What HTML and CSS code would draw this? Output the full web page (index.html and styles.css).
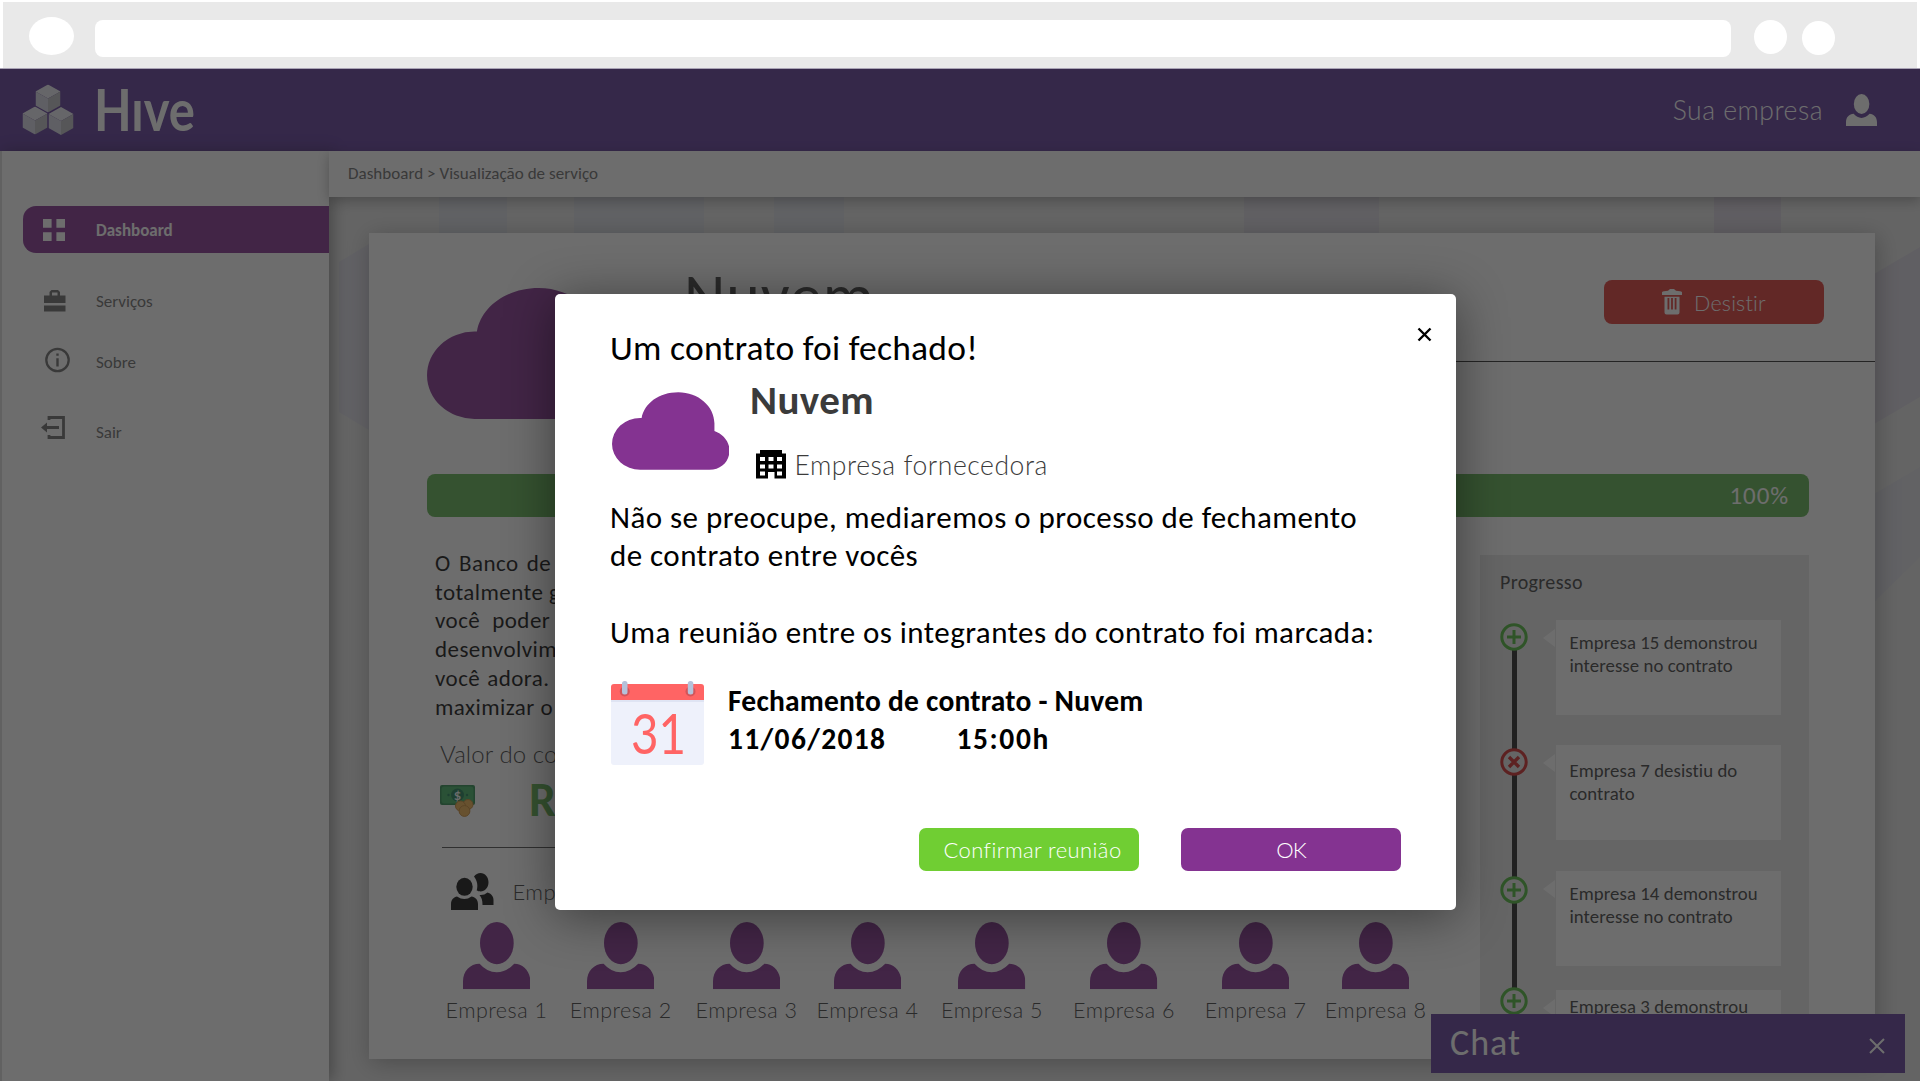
FILE: index.html
```html
<!DOCTYPE html>
<html lang="pt-BR">
<head>
<meta charset="utf-8">
<title>Hive - Visualização de serviço</title>
<link rel="stylesheet" href="styles.css">
</head>
<body>
<svg class="defs" width="0" height="0">
  <symbol id="cloud" viewBox="0 0 117 77.3"><path d="M28 77.3A28 25.8 0 0 1 28 25.7L29.5 25.7C32 11 47 0 66 0C86 0 102 14 102 31L102 38.7C111 42 117 49.500 117 58C117 69 109 77.300 97 77.300Z"/></symbol>
  <symbol id="person" viewBox="0 0 67 67"><ellipse cx="33.700" cy="21" rx="16.800" ry="21"/><path d="M0 67V59C0 49 7 41.500 16.500 41.500Q24 50 33.500 50Q43 50 51 41.500C60 41.500 67 49 67 59V67Z"/></symbol>
  <symbol id="plus" viewBox="0 0 28 28"><circle cx="14" cy="14" r="12.200" fill="#e8e8e8" stroke-width="3"/><path d="M14 7V21M7 14H21" stroke-width="3"/></symbol>
  <symbol id="times" viewBox="0 0 28 28"><circle cx="14" cy="14" r="12.200" fill="#e8e8e8" stroke-width="3"/><path d="M9 9L19 19M19 9L9 19" stroke-width="3.400"/></symbol>
  <symbol id="cube" viewBox="0 0 25 28"><path fill="#ececf2" d="M12.500 0L25 7L12.500 14L0 7Z"/><path fill="#d6d6e4" d="M0 7L12.500 14V28L0 21Z"/><path fill="#bcbcc2" d="M25 7L12.500 14V28L25 21Z"/></symbol>
</svg>

<div class="browser">
  <span class="dot dot-nav"></span>
  <span class="address"></span>
  <span class="dot dot-a"></span>
  <span class="dot dot-b"></span>
</div>

<div class="app">
  <header class="topbar">
    <svg class="logo" width="180" height="54" viewBox="0 0 180 54">
      <use href="#cube" x="13.500" y="1.500" width="25" height="28"/>
      <use href="#cube" x="0.500" y="23.500" width="25" height="28"/>
      <use href="#cube" x="26.500" y="24" width="25" height="28"/>
      <text class="word" x="72" y="47.500" textLength="101" lengthAdjust="spacingAndGlyphs">Hıve</text>
    </svg>
    <span class="account">Sua empresa</span>
    <svg class="account-icon" width="31" height="32" viewBox="0 0 67 67" preserveAspectRatio="none"><use href="#person" width="67" height="67"/></svg>
  </header>

  <div class="body">
    <nav class="sidebar">
      <a class="item active"><svg class="ico" width="22" height="22" viewBox="0 0 22 22"><path d="M0 0H8.600V8.700H0ZM13.400 0H22V8.700H13.400ZM0 13.300H8.600V22H0ZM13.400 13.300H22V22H13.400Z"/></svg><span>Dashboard</span></a>
      <a class="item servicos"><svg class="ico" width="22" height="22" viewBox="0 0 22 22"><path fill-rule="evenodd" d="M0 5.500H5.500V2L7.500 0H14L16 2V5.500H21.500V13H0ZM8 5.500H13.500V2.500H8ZM0 15.500H21.500V21.500H0Z"/></svg><span>Serviços</span></a>
      <a class="item sobre"><svg class="ico" width="25" height="26" viewBox="0 0 25 26"><circle cx="12.500" cy="13" r="11.200" fill="none" stroke="#6b6b6b" stroke-width="2.300"/><path d="M11.300 11.200H13.700V19.500H11.300ZM11.300 6.500H13.700V8.800H11.300Z"/></svg><span>Sobre</span></a>
      <a class="item sair"><svg class="ico" width="24" height="23" viewBox="0 0 24 23"><path d="M8 4V1.500H22.500V21.500H8V19" fill="none" stroke="#6b6b6b" stroke-width="2.800"/><path d="M0 11.500L6 6.500V10H18V13H6V16.500Z"/></svg><span>Sair</span></a>
    </nav>

    <div class="main">
      <div class="crumbs">Dashboard &gt; Visualização de serviço</div>
      <div class="stage">
        <svg class="hexes" width="1591" height="884" viewBox="0 0 1591 884">
          <g fill="#dcdfe6"><path d="M110 0H178V40H110Z"/><path d="M245 0H375V40H245Z"/><path d="M445 0H515V40H445Z"/><path d="M915 0H1050V40H915Z" fill="#dcd9e2"/><path d="M1385 0H1452V40H1385Z" fill="#dad4e0"/></g>
          <path fill="#dddce6" d="M10 65L60 35V245L10 215Z"/>
          <path fill="#dbd7e2" d="M1591 50L1540 80V230L1591 200Z"/>
          <path fill="#dedee6" d="M1540 300L1591 270V360L1540 410Z"/>
        </svg>

        <section class="card">
          <div class="head">
            <svg class="cloud-lg" width="198" height="131"><use href="#cloud"/></svg>
            <div class="headline">
              <h1>Nuvem</h1>
              <button class="quit"><svg width="20" height="26" viewBox="0 0 20 26"><path fill-rule="evenodd" d="M0 3.300Q1 1.800 6 1.800L8 0H12L14 1.800Q19 1.800 20 3.300V6H0ZM2.500 7.800H17.500V23.500Q17.500 25.500 15.500 25.500H4.500Q2.500 25.500 2.500 23.500ZM5.500 9V20.500H7.300V9ZM9.100 9V20.500H10.900V9ZM12.700 9V20.500H14.500V9Z"/></svg><span>Desistir</span></button>
            </div>
          </div>
          <div class="bar">100%</div>
          <div class="cols">
            <div class="info">
              <p class="desc"><span class="w3">O Banco de</span><span>totalmente gratuito</span><span class="w6">você poder</span><span>desenvolvimento</span><span class="w1">você adora.</span><span>maximizar o</span></p>
              <div class="label">Valor do contrato</div>
              <div class="value">
                <svg width="36" height="34" viewBox="0 0 36 34"><rect x="0" y="1" width="35" height="20" rx="2" fill="#2b8a4e"/><rect x="1.500" y="2.500" width="32" height="17" rx="3" fill="#3fae62"/><circle cx="17.500" cy="11" r="6.500" fill="#1f7d55"/><text x="17.500" y="15.500" text-anchor="middle" class="cash">$</text><circle cx="8.500" cy="11" r="1.200" fill="#1f7d55"/><circle cx="27" cy="11" r="1.200" fill="#1f7d55"/><g fill="#eeb04e" stroke="#c98935" stroke-width="1"><circle cx="28" cy="20.500" r="5"/><circle cx="20.500" cy="22" r="5"/><circle cx="24.500" cy="27" r="5.400"/></g></svg>
                <b>R$ 000</b>
              </div>
              <div class="rule"></div>
              <div class="group">
                <svg width="43" height="37" viewBox="0 0 43 37"><ellipse cx="13.500" cy="13.800" rx="8.200" ry="9"/><path d="M0 37V31C0 26.500 3 24 6 23.500Q13.500 28.500 20.500 23.500C24 24 27 26.500 27 31V37Z"/><path d="M23 3.500C24.500 1.500 27 0 29.500 0C34 0 37.500 4 37.500 9.200C37.500 14.500 34 18.400 29.500 18.400C28 18.400 27 18 25.700 17.500C27 13 26.500 8 23 3.500Z"/><path d="M28.500 22Q33 22.500 36.500 19.500C40 20.500 42.500 23 42.500 27V32H31.500C31.500 27 30.500 24.500 28.500 22Z"/></svg>
                <span>Empresas</span>
              </div>
              <ul class="people">
                <li><svg><use href="#person"/></svg>Empresa 1</li>
                <li><svg><use href="#person"/></svg>Empresa 2</li>
                <li><svg><use href="#person"/></svg>Empresa 3</li>
                <li><svg><use href="#person"/></svg>Empresa 4</li>
                <li><svg><use href="#person"/></svg>Empresa 5</li>
                <li><svg><use href="#person"/></svg>Empresa 6</li>
                <li><svg><use href="#person"/></svg>Empresa 7</li>
                <li><svg><use href="#person"/></svg>Empresa 8</li>
              </ul>
            </div>
            <aside class="panel">
              <h2>Progresso</h2>
              <ol class="timeline">
                <li class="e1"><svg class="ok"><use href="#plus"/></svg><p>Empresa 15 demonstrou<br>interesse no contrato</p></li>
                <li class="e2"><svg class="no"><use href="#times"/></svg><p>Empresa 7 desistiu do<br>contrato</p></li>
                <li class="e3"><svg class="ok"><use href="#plus"/></svg><p>Empresa 14 demonstrou<br>interesse no contrato</p></li>
                <li class="e4"><svg class="ok"><use href="#plus"/></svg><p>Empresa 3 demonstrou</p></li>
              </ol>
            </aside>
          </div>
        </section>
      </div>
    </div>
  </div>

  <div class="chat"><span>Chat</span><svg width="16" height="16" viewBox="0 0 16 16"><path d="M1 1L15 15M15 1L1 15"/></svg></div>
  <div class="overlay"></div>

  <div class="modal">
    <svg class="close" width="15" height="15" viewBox="0 0 15 15"><path d="M1.500 1.500L13.500 13.500M13.500 1.500L1.500 13.500"/></svg>
    <h3>Um contrato foi fechado!</h3>
    <div class="company">
      <svg class="cloud-sm" width="117.500" height="78"><use href="#cloud"/></svg>
      <div>
        <h4>Nuvem</h4>
        <div class="supplier"><svg width="30" height="29" viewBox="0 0 30 29"><path fill-rule="evenodd" d="M4 0H26V3.500H30V28.500H18.500V22H12V28.500H0V3.500H4ZM4 7V11H9V7ZM12.500 7V11H17.500V7ZM21 7V11H26V7ZM4 14.500V18.500H9V14.500ZM12.500 14.500V18.500H17.500V14.500ZM21 14.500V18.500H26V14.500ZM4 21.500V25.500H9V21.500ZM21 21.500V25.500H26V21.500Z"/></svg><span>Empresa fornecedora</span></div>
      </div>
    </div>
    <p class="message">Não se preocupe, mediaremos o processo de fechamento<br>de contrato entre vocês<br><br><span>Uma reunião entre os integrantes do contrato foi marcada:</span></p>
    <div class="event">
      <svg width="93" height="84" viewBox="0 0 93 84"><path fill="#eef1fb" d="M0 18H93V81Q93 84 90 84H3Q0 84 0 81Z"/><path fill="#dfe4f3" d="M0 18H93V21H0Z"/><path fill="#ff6464" d="M0 19V6Q0 3 3 3H90Q93 3 93 6V19Z"/><circle cx="13.700" cy="10.500" r="5" fill="#d2555a"/><circle cx="79.500" cy="10.500" r="5" fill="#d2555a"/><rect x="11" y="0" width="5.500" height="13.500" rx="2.500" fill="#b5c2da"/><rect x="76.800" y="0" width="5.500" height="13.500" rx="2.500" fill="#b5c2da"/><text class="day" x="20" y="73" textLength="55" lengthAdjust="spacingAndGlyphs">31</text></svg>
      <div class="when"><div>Fechamento de contrato - Nuvem</div><div class="dt"><span class="date">11/06/2018</span><span class="time">15:00h</span></div></div>
    </div>
    <div class="actions"><button class="confirm">Confirmar reunião</button><button class="okbtn">OK</button></div>
  </div>
</div>
</body>
</html>
```
FILE: styles.css
```css
*{box-sizing:border-box;margin:0;padding:0}
body{width:1920px;height:1081px;overflow:hidden;background:#fff;font-family:Carlito,Calibri,Lato,sans-serif;color:#404040;font-kerning:normal}
h1,h2,h3,h4{font-weight:400}
ul,ol{list-style:none}
button{border:0;font:inherit}
svg{display:block;flex:none}
.defs{position:absolute}

/* Browser frame */
.browser{height:66px;margin:2px 3px 0;background:#e9e9e9;display:flex;align-items:flex-start;padding-left:26px}
.dot{background:#fff;border-radius:50%}
.dot-nav{width:45px;height:38px;margin-top:15px}
.address{width:1636px;height:37px;margin:18px 23px 0 21px;background:#fff;border-radius:8px}
.dot-a{width:33px;height:34px;margin-top:18px}
.dot-b{width:33px;height:34px;margin:19px 0 0 15px}

.app{position:relative;height:1013px;display:flex;flex-direction:column;background:#fff;overflow:hidden}
.overlay{position:absolute;inset:1px 0 0;z-index:2;background:rgba(31,31,31,.651)}

.topbar{height:83px;flex:none;background:#5e3998;border-top:1px solid #a9a3b5;display:flex;align-items:center;padding:0 43px 0 22px}
.logo{overflow:visible}
.word{font:700 58px Lato,sans-serif;fill:#fff}
.account{margin-left:auto;font:300 26.500px/30px Lato,sans-serif;letter-spacing:.5px;color:#fff;margin-right:23px}
.account-icon{fill:#fff}

.body{flex:1;display:flex;min-height:0}
.sidebar{width:328.500px;flex:none;border-left:2px solid #ddd;padding-top:55px;background:#fff;z-index:1;box-shadow:4px 0 14px rgba(0,0,0,.35)}
.item{display:grid;grid-template-columns:73px 1fr;height:30px;font-size:17px;line-height:32px;color:#6b6b6b;padding-left:21px}
.item .ico{fill:#6b6b6b;margin-left:21px}
.active{height:46.5px;margin-left:21px;padding:1px 0 0;background:#843391;border-radius:13px 0 0 13px;color:#fff;font-weight:700;line-height:48px}
.active .ico{fill:#fff;margin:12px 0 0 20px}
.servicos{margin-top:34px;line-height:30px}
.servicos .ico{margin-top:3px}
.sobre{margin-top:30.5px}
.sobre .ico{margin:0 0 0 22px}
.sair{margin-top:40px}
.sair .ico{margin:-1px 0 0 18px}

.main{flex:1;display:flex;flex-direction:column;min-width:0}
.crumbs{height:46px;flex:none;padding-left:19.500px;font-size:17px;line-height:45px;color:#6b6b6b;letter-spacing:.04px;z-index:1;box-shadow:0 4px 12px rgba(0,0,0,.3);background:#fff}
.stage{position:relative;flex:1;background:#e6e6e6;padding:36px 45px 22px 40.500px;display:flex}
.hexes{position:absolute;left:0;top:0}

.card{position:relative;flex:1;min-width:0;background:#fff;box-shadow:2px 4px 22px rgba(0,0,0,.3);padding-left:58px}
.head{height:241px;display:flex}
.cloud-lg{margin-top:55.300px;fill:#843391}
.headline{flex:1;height:129px;margin-left:29px;border-bottom:1px solid #303030;display:flex;align-items:flex-start;justify-content:space-between}
h1{font-size:64px;line-height:70px;letter-spacing:.9px;margin:28px 0 0 30px;color:#404040}
.quit{width:220px;height:44px;margin:47px 51px 0 0;border-radius:8px;background:#df3936;color:#fff;fill:#fff;display:flex;align-items:center;padding-left:58px;gap:12px;font:300 21.500px/44px Lato,sans-serif;letter-spacing:.2px}
.quit span{padding-top:2px}
.bar{height:42.5px;margin-right:66px;border-radius:8px;background:#5fb250;color:#fff;font-size:25px;line-height:43px;letter-spacing:.9px;text-align:right;padding-right:20px}
.cols{display:flex;height:542px}
.info{width:1053px;flex:none}
.desc{margin:32.300px 0 0 8px;font-size:23px;line-height:28.850px;letter-spacing:.44px;color:#111}
.desc span{display:block;white-space:nowrap}
.w3{word-spacing:2.700px}
.w6{word-spacing:6.400px}
.w1{word-spacing:1.400px}
.label{margin:16.700px 0 0 13px;font:300 24px/30px Lato,sans-serif;letter-spacing:.1px}
.value{display:flex;margin:5.500px 0 0 13px;height:50px}
.value svg{margin-top:10px}
.cash{font:700 12px Lato,sans-serif;fill:#fff}
.value b{font-size:48px;line-height:52px;color:#5fb250;margin-left:53px}
.rule{width:960px;height:1px;background:#505050;margin:23px 0 0 15px}
.group{display:flex;height:38px;margin:25px 0 0 23.500px;fill:#111}
.group span{font:300 22px/30px Lato,sans-serif;letter-spacing:.5px;margin:3.500px 0 0 19px}
.people{display:grid;grid-template-columns:124.200px 125.800px 121px 124.500px 132px 131.700px 120px 98px;margin:11.200px 0 0 20px}
.people li{width:99px;display:flex;flex-direction:column;align-items:center;gap:5.500px;font:300 21.500px/30px Lato,sans-serif;letter-spacing:.5px;white-space:nowrap}
.people svg{width:67.300px;height:67.300px;fill:#843391}

.panel{width:329px;margin-top:38.500px;height:503px;background:#e8e8e8;padding:12px 28px 0 20px;overflow:hidden}
h2{font-size:20px;line-height:30px;letter-spacing:.34px}
.timeline{position:relative;margin-top:23px}
.timeline::before{content:"";position:absolute;left:12px;top:20px;width:5px;height:370px;background:#262626}
.timeline li{position:relative;display:flex;justify-content:space-between;height:95px}
.timeline svg{width:28px;height:28px;margin-top:3px;fill:none}
.ok{stroke:#4fb83a}
.no{stroke:#d22a2a}
.timeline p{position:relative;width:225.500px;background:#fff;padding:11.400px 0 0 14px;font-size:18.800px;line-height:23px;letter-spacing:.06px;color:#404040}
.timeline p::before{content:"";position:absolute;left:-12.500px;top:9px;border:9px solid transparent;border-left:0;border-right:12.500px solid #fff}
.timeline .e2{margin-top:30px}
.e2 p{padding-top:13.800px}
.timeline .e3{margin-top:31px}
.timeline .e3 svg{margin-top:4.500px}
.timeline .e4{margin-top:24px}
.timeline .e4 svg{margin-top:-3px}
.timeline .e4 p{padding-top:5px}

/* Chat dock */
.chat{position:absolute;left:1431px;top:946px;width:474px;height:59px;background:#5e3998;display:flex;align-items:center;justify-content:space-between;padding:0 20px 0 19px;color:#fff}
.chat span{font-size:36px;line-height:50px;letter-spacing:.97px;margin-top:-2px}
.chat svg{stroke:#fff;stroke-width:2;margin-top:5px}

/* Contract dialog */
.modal{position:absolute;z-index:3;left:555px;top:226px;width:900.500px;height:616px;background:#fff;border-radius:5px;box-shadow:0 6px 50px rgba(0,0,0,.45);padding:29px 0 0 55px;color:#000}
.close{position:absolute;right:24px;top:33px;stroke:#000;stroke-width:2.400}
h3{font-size:35.500px;line-height:50px;letter-spacing:.27px}
.company{display:flex;height:107px}
.cloud-sm{margin:18.500px 0 0 1.500px;fill:#843391}
.company>div{margin:2px 0 0 21px}
h4{font-size:41px;font-weight:700;line-height:50px;letter-spacing:.4px;color:#3b3b3b}
.supplier{display:flex;gap:9px;margin:24px 0 0 5.500px}
.supplier span{font:300 26.500px/32px Lato,sans-serif;letter-spacing:.55px;color:#3b3b3b}
.supplier svg{margin-top:1px}
.message{margin-top:18px;font-size:31px;line-height:38.300px;letter-spacing:.45px;white-space:nowrap}
.event{display:flex;margin:30.300px 0 0 1px}
.when{font-size:29.500px;font-weight:700;line-height:38px;letter-spacing:.22px;margin:1px 0 0 24px}
.dt{display:flex}
.date{width:228.500px;letter-spacing:1.340px}
.time{letter-spacing:1.600px}
.day{font:400 57px Lato,sans-serif;fill:#ff6464}
.actions{display:flex;gap:42px;margin:62.500px 0 0 309px}
.actions button{width:220px;height:43.500px;border-radius:7px;color:#fff;font:300 22px/42px Lato,sans-serif}
.confirm{background:#70ce33;letter-spacing:.4px;padding-left:7px}
.okbtn{background:#843391;letter-spacing:-1px}
```
